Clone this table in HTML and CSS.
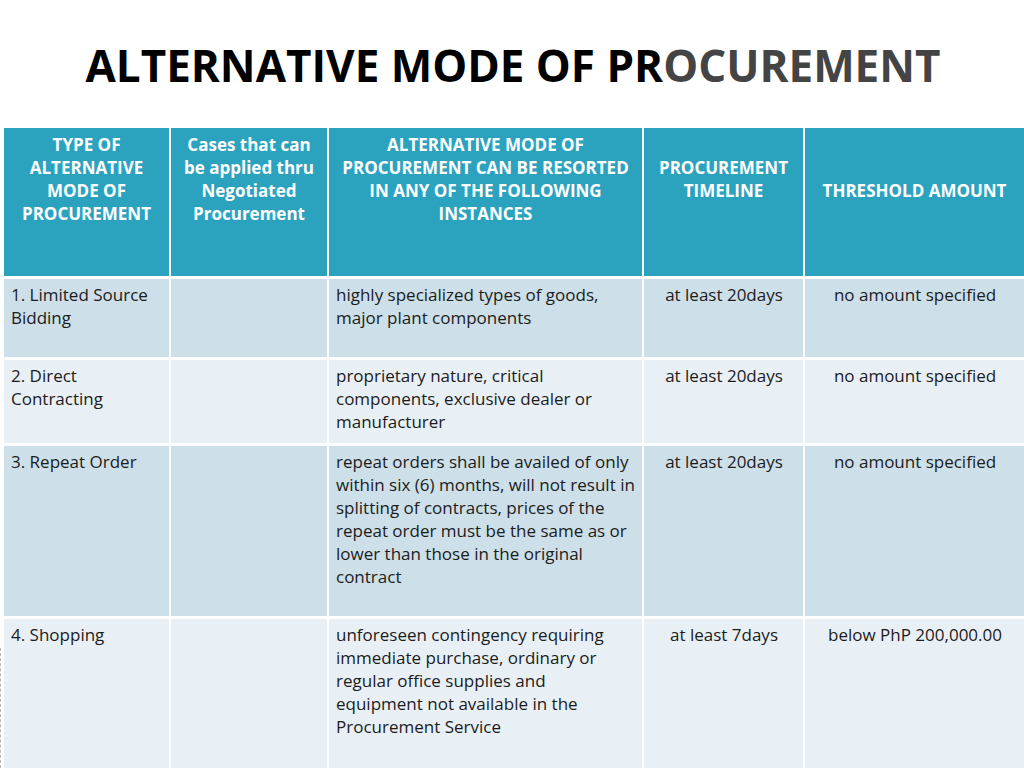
FILE: index.html
```html
<!DOCTYPE html>
<html>
<head>
<meta charset="utf-8">
<link rel="stylesheet" href="styles.css">
</head>
<body>
<h1 class="title">ALTERNATIVE MODE OF PR<span class="title-fade">OCUREMENT</span></h1>
<div class="deco"></div>
<table class="proc">
  <colgroup>
    <col class="c1"><col class="c2"><col class="c3"><col class="c4"><col class="c5">
  </colgroup>
  <thead>
    <tr>
      <th>TYPE OF ALTERNATIVE MODE OF PROCUREMENT</th>
      <th class="narrow">Cases that can be applied thru Negotiated Procurement</th>
      <th>ALTERNATIVE MODE OF PROCUREMENT CAN BE RESORTED IN ANY OF THE FOLLOWING INSTANCES</th>
      <th class="low">PROCUREMENT TIMELINE</th>
      <th class="mid">THRESHOLD AMOUNT</th>
    </tr>
  </thead>
  <tbody>
    <tr class="r1">
      <td>1. Limited Source Bidding</td>
      <td></td>
      <td>highly specialized types of goods, major plant components</td>
      <td class="ctr">at least 20days</td>
      <td class="ctr">no amount specified</td>
    </tr>
    <tr class="r2">
      <td>2. Direct Contracting</td>
      <td></td>
      <td>proprietary nature, critical components, exclusive dealer or manufacturer</td>
      <td class="ctr">at least 20days</td>
      <td class="ctr">no amount specified</td>
    </tr>
    <tr class="r3">
      <td>3. Repeat Order</td>
      <td></td>
      <td>repeat orders shall be availed of only within six (6) months, will not result in splitting of contracts, prices of the repeat order must be the same as or lower than those in the original contract</td>
      <td class="ctr">at least 20days</td>
      <td class="ctr">no amount specified</td>
    </tr>
    <tr class="r4">
      <td>4. Shopping</td>
      <td></td>
      <td>unforeseen contingency requiring immediate purchase, ordinary or regular office supplies and equipment not available in the Procurement Service</td>
      <td class="ctr">at least 7days</td>
      <td class="ctr">below PhP 200,000.00</td>
    </tr>
  </tbody>
</table>
</body>
</html>
```
FILE: styles.css
```css
html, body {
  margin: 0;
  padding: 0;
  background: #ffffff;
  overflow: hidden;
}
body {
  width: 1024px;
  height: 768px;
  font-family: "Open Sans", "Noto Sans", sans-serif;
  color: #1c1c1c;
  position: relative;
}
.title {
  margin: 0;
  height: 125px;
  box-sizing: border-box;
  padding-top: 37px;
  padding-left: 2px;
  text-align: center;
  font-size: 44px;
  font-weight: 700;
  line-height: 56px;
  color: #000;
}
.title-fade {
  color: #444444;
}
.deco {
  position: absolute;
  left: 0;
  top: 648px;
  width: 4px;
  height: 120px;
  border-left: 1px dashed #b9b9b9;
}
.proc {
  margin-left: 2px;
  border-collapse: separate;
  border-spacing: 2px 3px;
  table-layout: fixed;
  width: 1024px;
  font-size: 17px;
  line-height: 23px;
}
.c1 { width: 165px; }
.c2 { width: 156px; }
.c3 { width: 313px; }
.c4 { width: 159px; }
.c5 { width: 219px; }
.proc th {
  background: #2ba3bf;
  color: #ffffff;
  font-weight: 700;
  text-align: center;
  vertical-align: top;
  height: 148px;
  box-sizing: border-box;
  padding: 5px 4px 0;
}
.proc th.narrow {
  padding-left: 12px;
  padding-right: 12px;
}
.proc th.low {
  padding-top: 28px;
}
.proc th.mid {
  padding-top: 51px;
}
.proc td {
  vertical-align: top;
  text-align: left;
  box-sizing: border-box;
  padding: 4px 6px 0 7px;
}
.proc td.ctr {
  text-align: center;
}
.r1 td, .r3 td { background: #cddfe8; }
.r2 td, .r4 td { background: #e8eff5; }
.r1 td { height: 78px; }
.r2 td { height: 83px; }
.r3 td { height: 170px; }
.r4 td { height: 160px; }
```
